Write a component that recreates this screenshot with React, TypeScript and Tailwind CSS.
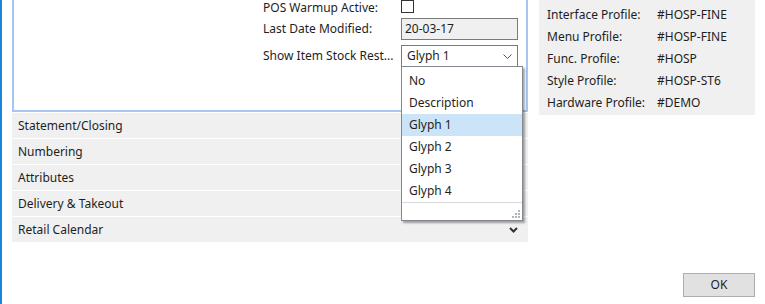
import { useState } from "react";

const profiles = [
  ["Interface Profile:", "#HOSP-FINE"],
  ["Menu Profile:", "#HOSP-FINE"],
  ["Func. Profile:", "#HOSP"],
  ["Style Profile:", "#HOSP-ST6"],
  ["Hardware Profile:", "#DEMO"],
];

const sections = ["Statement/Closing", "Numbering", "Attributes", "Delivery & Takeout", "Retail Calendar"];

const options = ["No", "Description", "Glyph 1", "Glyph 2", "Glyph 3", "Glyph 4"];

function Chevron({ bold }: { bold?: boolean }) {
  if (bold) {
    return (
      <svg width="9" height="6" viewBox="0 0 9 6">
        <path d="M1 1 L4.5 4.5 L8 1" fill="none" stroke="#333" strokeWidth="2" />
      </svg>
    );
  }
  return (
    <svg width="9" height="5" viewBox="0 0 9 5">
      <path d="M0.5 0.5 L4.5 4.5 L8.5 0.5" fill="none" stroke="#555" strokeWidth="1" />
    </svg>
  );
}

export default function App() {
  const [selected] = useState("Glyph 1");

  return (
    <div
      className="relative w-[765px] h-[304px] bg-white border-l-2 border-[#1883d7] flex flex-col overflow-hidden text-[12px] text-[#1e1e1e]"
      style={{ fontFamily: '"Noto Sans", "Open Sans", sans-serif' }}
    >
      <div className="flex pl-[10px]">
        {/* left column */}
        <div className="w-[516px]">
          <div className="h-[112px] border-x-2 border-b-2 border-[#a3c6f5] pl-[249px]">
            <div className="flex items-center h-[15px]">
              <span className="w-[138px] leading-[15px]">POS Warmup Active:</span>
              <span className="w-[13px] h-[13px] border border-[#333] bg-white self-start" />
            </div>
            <div className="flex items-center h-[22px] mt-[3px]">
              <span className="w-[138px]">Last Date Modified:</span>
              <div className="w-[117px] h-[22px] border border-[#7a7a7a] bg-[#f0f0f0] flex items-center pl-[3px]">
                20-03-17
              </div>
            </div>
            <div className="flex items-center h-[22px] mt-[5px]">
              <span className="w-[138px]">Show Item Stock Rest...</span>
              <div className="w-[117px] h-[23px] border border-[#7a7a7a] bg-white flex items-center justify-between pl-[5px] pr-[5px]">
                <span>{selected}</span>
                <Chevron />
              </div>
            </div>
          </div>
          <div className="mt-px flex flex-col gap-px">
            {sections.map((s) => (
              <div key={s} className="h-[25px] bg-[#f0f0f0] flex items-center justify-between pl-[6px] pr-[10px] pt-px">
                <span>{s}</span>
                <Chevron bold />
              </div>
            ))}
          </div>
        </div>

        {/* right profile panel */}
        <div className="ml-[11px] w-[216px] h-[115px] bg-[#f0f0f0] pt-[4px] pl-[8px]">
          {profiles.map(([k, v]) => (
            <div key={k} className="flex items-center h-[22px]">
              <span className="w-[110px]">{k}</span>
              <span>{v}</span>
            </div>
          ))}
        </div>
      </div>

      <div className="mt-auto flex justify-end pr-[10px] pb-[7px]">
        <button className="w-[72px] h-[24px] bg-[#e1e1e1] border border-[#adadad] text-[12px]">OK</button>
      </div>

      {/* dropdown popup */}
      <div className="absolute left-[399px] top-[66px] w-[122px] h-[155px] bg-white border border-[#828790] shadow-[2px_2px_2px_rgba(0,0,0,0.35)] flex flex-col">
        <div className="pt-[3px]">
          {options.map((o) => (
            <div
              key={o}
              className={`h-[22px] flex items-center pl-[7px] ${o === selected ? "bg-[#cce4f7]" : ""}`}
            >
              {o}
            </div>
          ))}
        </div>
        <div className="mt-auto h-[19px] border-t border-[#d9d9d9] flex justify-end items-end pr-[2px] pb-[2px]">
          <svg width="8" height="8" viewBox="0 0 8 8">
            <rect x="6" y="0" width="2" height="2" fill="#b5b5b5" />
            <rect x="3" y="3" width="2" height="2" fill="#b5b5b5" />
            <rect x="6" y="3" width="2" height="2" fill="#b5b5b5" />
            <rect x="0" y="6" width="2" height="2" fill="#b5b5b5" />
            <rect x="3" y="6" width="2" height="2" fill="#b5b5b5" />
            <rect x="6" y="6" width="2" height="2" fill="#b5b5b5" />
          </svg>
        </div>
      </div>
    </div>
  );
}
